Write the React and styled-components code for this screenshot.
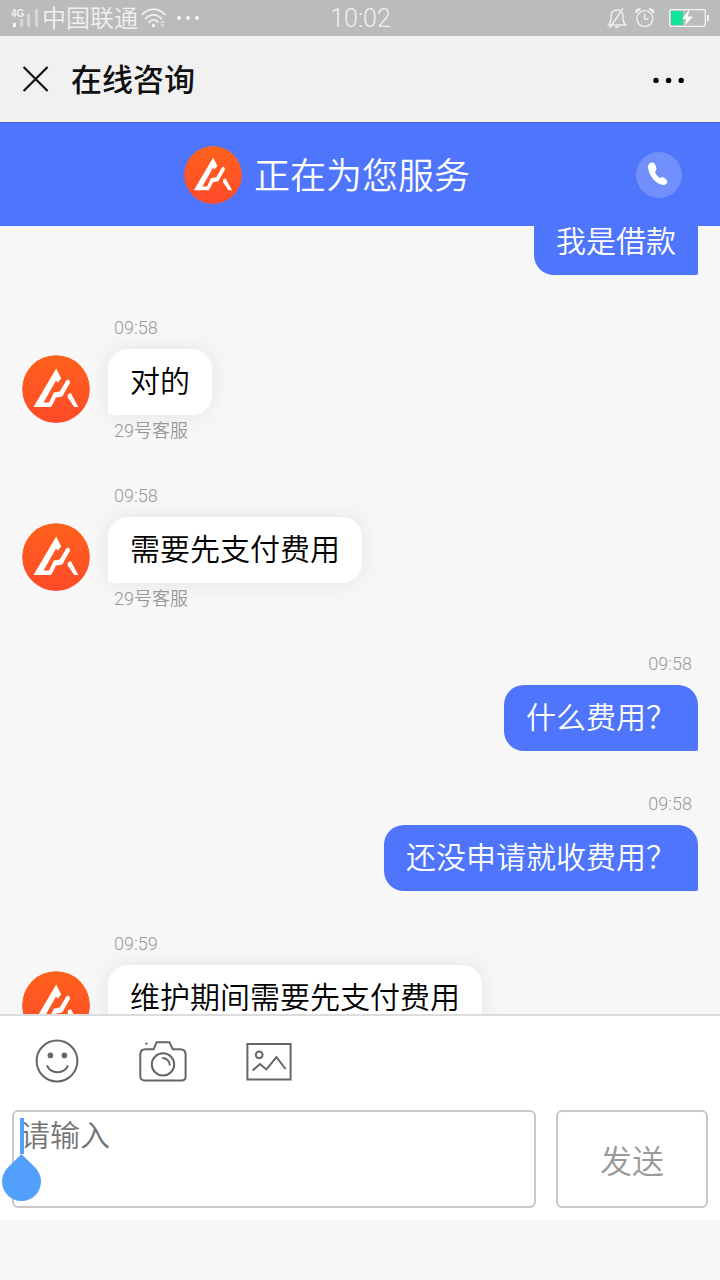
import React, { useLayoutEffect, useRef, useState } from "react";
import styled, { createGlobalStyle, ThemeProvider } from "styled-components";

const theme = {
  blue: "#4e75fc",
  page: "#f7f7f7",
  muted: "#999",
  border: "#c8c8c8",
  caret: "#539ffc",
  status: "#f0f0f0",
};

const messages = [
  { id: 1, mine: true, text: "我是借款" },
  { id: 2, time: "09:58", text: "对的", agent: "29号客服" },
  { id: 3, time: "09:58", text: "需要先支付费用", agent: "29号客服" },
  { id: 4, mine: true, time: "09:58", text: "什么费用？" },
  { id: 5, mine: true, time: "09:58", text: "还没申请就收费用？" },
  { id: 6, time: "09:59", text: "维护期间需要先支付费用" },
];

// How far the conversation is scrolled when it opens
const INITIAL_SCROLL = 37;

function Logo({ size }) {
  return (
    <LogoSvg width={size} height={size} viewBox="0 0 68 68" aria-hidden="true">
      <defs>
        <linearGradient id={`logo-${size}`} x1="0" y1="0" x2="0" y2="1">
          <stop offset="0" stopColor="#ff621c" />
          <stop offset="1" stopColor="#ff4a2a" />
        </linearGradient>
      </defs>
      <circle cx="34" cy="34" r="34" fill={`url(#logo-${size})`} />
      <path
        fill="#fff"
        d="M34.2 13.6 L11.6 52 H29.2 L34 42.6 L40.2 41.4 L48.2 27.4 L46.8 24.4 L44.2 25.4 L37.8 36.6 L31.8 37.6 L27 47.6 H21.6 L34 25.4 L35.6 27.4 L39.2 23.4 Z"
      />
      <path
        fill="#fff"
        d="M45.8 39.4 L48.8 38 L56.4 52 H52.2 L45.8 42.4 Z"
      />
    </LogoSvg>
  );
}

function StatusBar() {
  return (
    <Status>
      <StatusGroup>
        <svg width="28" height="20" viewBox="0 0 28 20">
          <text
            x="0"
            y="9"
            fontSize="10"
            fontWeight="700"
            fontFamily="Liberation Sans, sans-serif"
            fill="#f0f0f0"
          >
            4G
          </text>
          <rect x="2" y="15" width="3" height="4" fill="#f4f4f4" />
          <path d="M9 11h3v8H9zM16 6h3v13h-3zM24 1h3v18h-3z" fill="#d6d6d6" />
        </svg>
        <Carrier>中国联通</Carrier>
        <svg width="26" height="20" viewBox="0 0 26 20" fill="none">
          <g stroke="#f0f0f0" strokeWidth="1.8">
            <path d="M.8 7C7 -.4 18 -.4 24.2 7" />
            <path d="M4.2 11.2C8.6 5.4 16.4 5.4 20.8 11.2" />
            <path d="M7.6 14.6C10.4 11 14.6 11 17.4 14.6" />
          </g>
          <circle cx="12.4" cy="17.6" r="1.8" fill="#f0f0f0" />
          <path d="M19 15l2.5-3 2.5 3zM19 16.6h5l-2.5 3z" fill="#dcdcdc" />
        </svg>
        <MoreDots width="22" height="6" viewBox="0 0 22 6">
          <circle cx="2" cy="3" r="2" />
          <circle cx="11" cy="3" r="2" />
          <circle cx="20" cy="3" r="2" />
        </MoreDots>
      </StatusGroup>
      <Clock>10:02</Clock>
      <StatusGroup $end>
        <svg
          width="20"
          height="20"
          viewBox="0 0 20 20"
          fill="none"
          stroke="#f0f0f0"
          strokeWidth="1.4"
        >
          <path d="M1.6 17C4 14.6 4 12.6 4 9C4 4.6 6.4 2 10 2C13.6 2 16 4.6 16 9C16 12.6 16.2 14.6 18.6 17Z" />
          <path d="M8 19.2H12M16 .4L2.8 20" />
        </svg>
        <svg
          width="20"
          height="20"
          viewBox="0 0 20 20"
          fill="none"
          stroke="#f0f0f0"
          strokeWidth="1.4"
        >
          <circle cx="9.8" cy="10.6" r="8" />
          <path d="M9.6 5.6V11H13.4" />
          <path
            d="M1 5C1.4 2.6 3 1.2 5.6 1.4M18.6 5C18.2 2.6 16.6 1.2 14 1.4"
            strokeWidth="2.4"
          />
        </svg>
        <Battery width="41" height="18" viewBox="0 0 41 18">
          <rect
            x=".7"
            y=".7"
            width="35.6"
            height="16.6"
            rx="1.6"
            fill="none"
            stroke="#f4f4f4"
            strokeWidth="1.3"
          />
          <rect x="2" y="2" width="12" height="14" fill="#12e499" />
          <path d="M38 6h2v6h-2z" fill="#f4f4f4" />
          <path d="M20 1L13 10H17.4L15.8 16.6L24 7.6H18.8L20.6 1Z" fill="#fff" />
        </Battery>
      </StatusGroup>
    </Status>
  );
}

function Message({ mine, time, text, agent }) {
  return (
    <Row $mine={mine}>
      {!mine && (
        <Avatar>
          <Logo size={68} />
        </Avatar>
      )}
      <Body $mine={mine}>
        {time && <Time>{time}</Time>}
        <Bubble $mine={mine}>{text}</Bubble>
        {agent && <Agent>{agent}</Agent>}
      </Body>
    </Row>
  );
}

function Composer() {
  const [value, setValue] = useState("");

  return (
    <Footer>
      <Tools>
        <Tool type="button" aria-label="表情">
          <ToolIcon viewBox="0 0 48 48">
            <circle cx="24" cy="24" r="20.4" />
            <circle cx="17.4" cy="18.4" r="2.8" fill="#666" stroke="none" />
            <circle cx="31.4" cy="18.4" r="2.8" fill="#666" stroke="none" />
            <path d="M14 28.4C17.4 37.4 31.6 37.4 35 28.4" />
          </ToolIcon>
        </Tool>
        <Tool type="button" aria-label="拍照">
          <ToolIcon viewBox="0 0 48 48">
            <path d="M6.4 12.3H14.6L17.6 5.3H30.4L33.8 12.3H41C44.6 12.3 46.6 14.4 46.6 17.6V39.4C46.6 42 45 43.4 42.6 43.4H5.4C3 43.4 1.3 42 1.3 39.4V17.6C1.3 14.4 3 12.3 6.4 12.3Z" />
            <circle cx="24" cy="27.4" r="11.2" />
            <path d="M23.2 21C27.6 21 30.8 24.2 30.8 28.6" />
            <circle cx="7.4" cy="6.6" r="1.2" fill="#666" stroke="none" />
          </ToolIcon>
        </Tool>
        <Tool type="button" aria-label="图片">
          <ToolIcon viewBox="0 0 48 48">
            <path d="M2.4 7H45.6V42.6H2.4Z" />
            <circle cx="14.2" cy="17.8" r="3.4" />
            <path d="M7.6 33.6L15 27L21.4 32.4L31.4 20.2L40.6 32" />
          </ToolIcon>
        </Tool>
      </Tools>
      <Entry>
        <Field>
          <Input
            aria-label="消息"
            placeholder="请输入"
            value={value}
            onChange={(e) => setValue(e.target.value)}
          />
          <Caret />
          <Handle viewBox="0 0 40 48" aria-hidden="true">
            <path d="M19.5 0L33.1 13.6A19.5 19.5 0 1 1 5.9 13.6Z" />
          </Handle>
        </Field>
        <Send type="button">发送</Send>
      </Entry>
    </Footer>
  );
}

function App() {
  const chat = useRef(null);

  useLayoutEffect(() => {
    chat.current.scrollTop = INITIAL_SCROLL;
  }, []);

  return (
    <ThemeProvider theme={theme}>
      <GlobalStyle />
      <Page>
        <StatusBar />
        <TitleBar>
          <IconButton type="button" aria-label="关闭">
            <svg
              width="28"
              height="28"
              viewBox="0 0 28 28"
              stroke="#111"
              strokeWidth="2.2"
            >
              <path d="M1.6 2L25.6 26M25.6 2L1.6 26" />
            </svg>
          </IconButton>
          <Title>在线咨询</Title>
          <IconButton type="button" aria-label="更多">
            <svg width="36" height="28" viewBox="0 0 36 28" fill="#000">
              <circle cx="5" cy="15.4" r="2.7" />
              <circle cx="17.6" cy="15.4" r="2.7" />
              <circle cx="30.2" cy="15.4" r="2.7" />
            </svg>
          </IconButton>
        </TitleBar>
        <ServiceBar>
          <Service>
            <Logo size={58} />
            <ServiceText>正在为您服务</ServiceText>
          </Service>
          <Call type="button" aria-label="电话">
            <svg width="46" height="46" viewBox="0 0 46 46" fill="#fff">
              <path d="M16 10.4C13.2 10.8 12 12.4 12 15C12.6 23 19.4 32 27.4 33C29.6 33 31 31.4 31.5 29.8C31.4 28.4 28.4 25.4 26.8 25.2C25.4 25 24.6 26.2 23.4 25.8C21.8 25 19.6 21.8 19.2 20.2C19.2 19 20.6 18.2 20.5 16.6C20.2 14 18.8 10.2 16 10.4Z" />
            </svg>
          </Call>
        </ServiceBar>
        <Chat ref={chat}>
          {messages.map((message) => (
            <Message key={message.id} {...message} />
          ))}
        </Chat>
        <Composer />
      </Page>
    </ThemeProvider>
  );
}

export default App;

const GlobalStyle = createGlobalStyle`
  * {
    box-sizing: border-box;
  }

  body {
    margin: 0;
    font-family: Roboto, "Noto Sans CJK SC", sans-serif;
    font-weight: 350;
  }

  button,
  textarea {
    font: inherit;
  }

  svg {
    display: block;
    flex: none;
  }
`;

const Page = styled.div`
  display: flex;
  flex-direction: column;
  height: 100vh;
  padding-bottom: 60px;
  background: ${(props) => props.theme.page};
`;

const Status = styled.header`
  display: grid;
  grid-template-columns: 1fr auto 1fr;
  align-items: center;
  flex: none;
  height: 36px;
  padding: 0 10px 0 11px;
  background: #bbb;
  color: ${(props) => props.theme.status};
`;

const StatusGroup = styled.div`
  display: flex;
  align-items: center;
  justify-content: ${(props) => (props.$end ? "flex-end" : "flex-start")};
  gap: ${(props) => (props.$end ? "8px" : "3px")};
`;

const Carrier = styled.span`
  padding-top: 2px;
  font-size: 24px;
  line-height: 34px;
`;

const MoreDots = styled.svg`
  margin-left: 7px;
  fill: #f4f4f4;
`;

const Clock = styled.time`
  padding-top: 2px;
  font-size: 25px;
  font-weight: 300;
  line-height: 34px;
`;

const Battery = styled.svg`
  margin-left: 6px;
`;

const TitleBar = styled.div`
  display: flex;
  align-items: center;
  flex: none;
  height: 86px;
  padding: 0 33px 0 22px;
  background: #f1f1f1;
`;

const IconButton = styled.button`
  padding: 0;
  border: none;
  background: none;
`;

const Title = styled.h1`
  flex: 1;
  margin: 0 0 0 21px;
  padding-top: 4px;
  font-size: 31px;
  font-weight: 500;
  line-height: 44px;
  color: #111;
`;

const ServiceBar = styled.div`
  display: flex;
  align-items: center;
  flex: none;
  height: 104px;
  padding: 0 38px 0 18px;
  border-top: 1px solid #4463d2;
  background: ${(props) => props.theme.blue};
`;

const Service = styled.div`
  display: flex;
  align-items: center;
  justify-content: center;
  flex: 1;
  gap: 12px;
`;

const ServiceText = styled.span`
  padding-top: 4px;
  font-size: 36px;
  line-height: 52px;
  color: #fff;
`;

const LogoSvg = styled.svg`
  border-radius: 50%;
`;

const Call = styled.button`
  padding: 0;
  border: none;
  border-radius: 50%;
  background: rgba(255, 255, 255, 0.2);
`;

const Chat = styled.main`
  display: flex;
  flex-direction: column;
  flex: 1;
  gap: 41px;
  min-height: 0;
  padding: 20px 22px;
  overflow-y: auto;
  scrollbar-width: none;
`;

const Row = styled.div`
  display: flex;
  flex: none;
  gap: 18px;
  justify-content: ${(props) => (props.$mine ? "flex-end" : "flex-start")};
`;

const Avatar = styled.div`
  flex: none;
  margin-top: 39px;
`;

const Body = styled.div`
  display: flex;
  flex-direction: column;
  align-items: ${(props) => (props.$mine ? "flex-end" : "flex-start")};
`;

const Time = styled.time`
  margin-bottom: 9px;
  padding: 0 6px;
  font-size: 18px;
  line-height: 24px;
  color: ${(props) => props.theme.muted};
`;

const Bubble = styled.div`
  padding: 11px 22px;
  border-radius: ${(props) =>
    props.$mine ? "20px 20px 2px 20px" : "20px 20px 20px 2px"};
  background: ${(props) => (props.$mine ? props.theme.blue : "#fff")};
  box-shadow: ${(props) =>
    props.$mine ? "none" : "0 0 24px rgba(0, 0, 0, 0.08)"};
  font-size: 30px;
  line-height: 44px;
  color: ${(props) => (props.$mine ? "#fff" : "#000")};
`;

const Agent = styled.div`
  padding: 4px 6px 0;
  font-size: 18px;
  line-height: 24px;
  color: ${(props) => props.theme.muted};
`;

const Footer = styled.footer`
  flex: none;
  border-top: 2px solid #dcdcdc;
  background: #fff;
`;

const Tools = styled.div`
  display: flex;
  gap: 58px;
  padding: 21px 33px 25px;
`;

const Tool = styled.button`
  padding: 0;
  border: none;
  background: none;
`;

const ToolIcon = styled.svg`
  width: 48px;
  height: 48px;
  fill: none;
  stroke: #666;
  stroke-width: 2;
`;

const Entry = styled.div`
  display: flex;
  gap: 20px;
  padding: 0 12px 12px;
`;

const Field = styled.div`
  position: relative;
  display: flex;
  flex: 1;
`;

const Input = styled.textarea`
  width: 100%;
  height: 98px;
  padding: 6px;
  border: 2px solid ${(props) => props.theme.border};
  border-radius: 6px;
  outline: none;
  background: #fff;
  font-size: 30px;
  line-height: 36px;
  resize: none;

  &::placeholder {
    color: #757575;
  }
`;

const Caret = styled.span`
  position: absolute;
  top: 8px;
  left: 8px;
  width: 4px;
  height: 36px;
  background: ${(props) => props.theme.caret};
`;

const Handle = styled.svg`
  position: absolute;
  top: 44px;
  left: -10px;
  width: 40px;
  height: 48px;
  fill: ${(props) => props.theme.caret};
`;

const Send = styled.button`
  width: 152px;
  border: 2px solid ${(props) => props.theme.border};
  border-radius: 6px;
  background: #fff;
  font-size: 32px;
  color: ${(props) => props.theme.muted};
`;
